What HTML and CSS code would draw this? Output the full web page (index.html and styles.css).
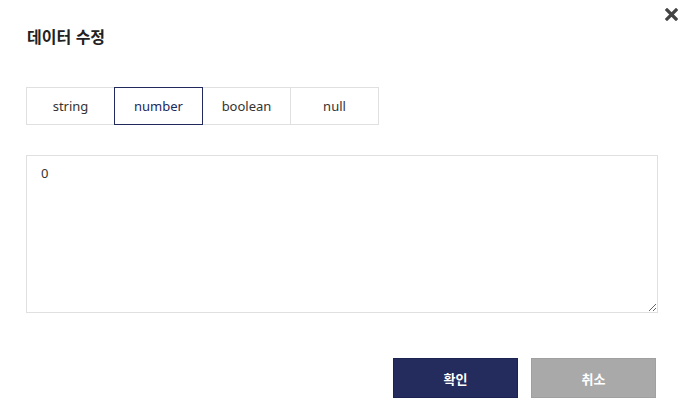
FILE: index.html
```html
<!DOCTYPE html>
<html lang="ko">
<head>
<meta charset="utf-8">
<title>데이터 수정</title>
<link rel="stylesheet" href="styles.css">
</head>
<body>
<div class="dialog">
  <button class="close" type="button" aria-label="닫기">
    <svg width="13" height="13" viewBox="0 0 13 13"><path d="M2 2 L11 11 M11 2 L2 11" stroke="#444" stroke-width="3.2" stroke-linecap="square" fill="none"/></svg>
  </button>
  <h2 class="title">데이터 수정</h2>
  <div class="tabs">
    <button class="tab" type="button">string</button>
    <button class="tab active" type="button">number</button>
    <button class="tab" type="button">boolean</button>
    <button class="tab" type="button">null</button>
  </div>
  <textarea class="editor">0</textarea>
  <div class="actions">
    <button class="btn primary" type="button">확인</button>
    <button class="btn secondary" type="button">취소</button>
  </div>
</div>
</body>
</html>
```
FILE: styles.css
```css
html, body {
  margin: 0;
  padding: 0;
  background: #fff;
}
body {
  font-family: "Noto Sans", "Noto Sans CJK KR", sans-serif;
  color: #333;
}
.dialog {
  position: relative;
  width: 690px;
  height: 415px;
  box-sizing: border-box;
  padding: 24px 32px 0 26px;
  display: flex;
  flex-direction: column;
}
.close {
  position: absolute;
  top: 8px;
  right: 12px;
  width: 13px;
  height: 13px;
  padding: 0;
  border: 0;
  background: none;
  display: flex;
}
.title {
  margin: 0 0 0 1px;
  font-family: "Noto Sans CJK KR", sans-serif;
  font-size: 16px;
  font-weight: 700;
  line-height: 24px;
  color: #222;
}
.tabs {
  display: flex;
  margin-top: 39px;
}
.tab {
  width: 89px;
  height: 38px;
  box-sizing: border-box;
  margin: 0 0 0 -1px;
  border: 1px solid #e0e0e0;
  background: #fff;
  font-family: "Noto Sans", "Noto Sans CJK KR", sans-serif;
  font-size: 13px;
  color: #333;
  padding: 0;
}
.tab:first-child {
  margin-left: 0;
}
.tab.active {
  border-color: #22295c;
  color: #22295c;
  position: relative;
  z-index: 1;
}
.editor {
  margin-top: 30px;
  width: 632px;
  height: 158px;
  box-sizing: border-box;
  border: 1px solid #e0e0e0;
  padding: 7px 14px;
  font-family: "Noto Sans", sans-serif;
  font-size: 13px;
  line-height: 20px;
  color: #333;
  resize: both;
  outline: none;
}
.actions {
  display: flex;
  justify-content: flex-end;
  gap: 13px;
  margin-top: 45px;
  padding-right: 2px;
}
.btn {
  width: 125px;
  height: 40px;
  box-sizing: border-box;
  border: 1px solid transparent;
  font-family: "Noto Sans CJK KR", sans-serif;
  font-size: 13px;
  font-weight: 700;
  color: #fff;
  padding: 0;
}
.btn.primary {
  background: #232c5c;
  border-color: #1b2350;
}
.btn.secondary {
  background: #a9a9a9;
  border-color: #a0a0a0;
}
```
